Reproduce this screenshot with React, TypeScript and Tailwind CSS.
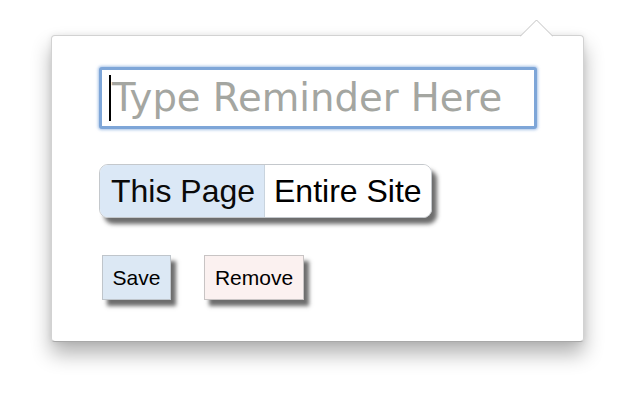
import React from 'react';

const App: React.FC = () => {
    return (
        <div className="w-[640px] h-[400px] bg-white pt-[35px] pl-[51px] overflow-hidden">
            <div className="relative w-[533px] h-[307px] bg-white border border-[#d2d2d2] border-b-[#a8a8a8] rounded-[4px] shadow-[0_12px_20px_rgba(0,0,0,0.3),0_0_6px_rgba(0,0,0,0.08)]">
                {/* popup arrow */}
                <svg className="absolute left-[468px] top-[-17px]" width="33" height="18" viewBox="0 0 33 18">
                    <path d="M0 17.5 L16.5 1 L33 17.5" fill="white" stroke="#c2c2c2" strokeWidth="1" />
                    <rect x="1" y="17" width="31" height="2" fill="white" />
                </svg>

                <div className="pl-[47px] pt-[31px]" style={{ fontFamily: '"Liberation Sans", Arial, sans-serif' }}>
                    {/* reminder text box */}
                    <div className="w-[438px] h-[62px] flex items-center pl-[7px] border-[3px] border-[#7ea6d8] rounded-[3px] bg-white shadow-[0_0_3px_1px_rgba(110,155,215,0.6)]">
                        <span className="w-[2px] h-[46px] bg-black" />
                        <span className="ml-[1px] text-[38.6px] leading-none text-[#a4a6a1]" style={{ fontFamily: '"DejaVu Sans", sans-serif' }}>
                            Type Reminder Here
                        </span>
                    </div>

                    {/* scope toggle */}
                    <div className="mt-[35px] flex w-[333px] h-[54px] rounded-[9px] border border-[#c4c8cc] overflow-hidden shadow-[5px_6px_4px_rgba(60,60,60,0.75)]">
                        <div className="w-[165px] flex items-center pl-[11px] bg-[#dbe8f6] border-r border-[#c9d4de] text-[32px] text-[#0a0a0a]">
                            This Page
                        </div>
                        <div className="flex-1 flex items-center pl-[9px] bg-white text-[32px] text-black">
                            Entire Site
                        </div>
                    </div>

                    {/* actions */}
                    <div className="mt-[37px] flex gap-[33px] pl-[3px]">
                        <button className="w-[69px] h-[45px] flex items-center justify-center bg-[#dce8f4] border border-[#bfc5cb] text-[21px] text-black shadow-[5px_6px_4px_rgba(60,60,60,0.75)]">
                            Save
                        </button>
                        <button className="w-[100px] h-[45px] flex items-center justify-center bg-[#fbf1f0] border border-[#c8c4c4] text-[21px] text-black shadow-[5px_6px_4px_rgba(60,60,60,0.75)]">
                            Remove
                        </button>
                    </div>
                </div>
            </div>
        </div>
    );
};

export default App;
